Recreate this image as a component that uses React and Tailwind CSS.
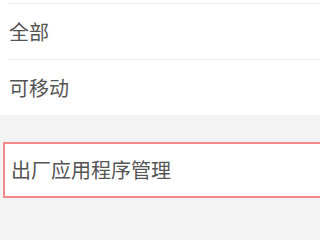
export default function App() {
  const font = { fontFamily: '"Noto Sans CJK SC", "Noto Sans", sans-serif' }
  return (
    <div className="w-[320px] h-[240px] overflow-hidden bg-[#f3f3f3]" style={font}>
      <div className="bg-white">
        <div className="h-[3px]" />
        <div className="ml-[8px] border-t border-[#ececec]" />
        <div className="h-[55px] flex items-center pl-[9px] text-[20px] text-[#555555]">全部</div>
        <div className="ml-[8px] border-t border-[#ececec]" />
        <div className="h-[55px] flex items-center pl-[9px] text-[20px] text-[#555555]">可移动</div>
      </div>
      <div className="pt-[27px] pl-[3px]">
        <div className="w-[330px] h-[56px] bg-white border-2 border-[#f28a8a] flex items-center pl-[6px] text-[20px] text-[#555555]">
          出厂应用程序管理
        </div>
      </div>
    </div>
  )
}
